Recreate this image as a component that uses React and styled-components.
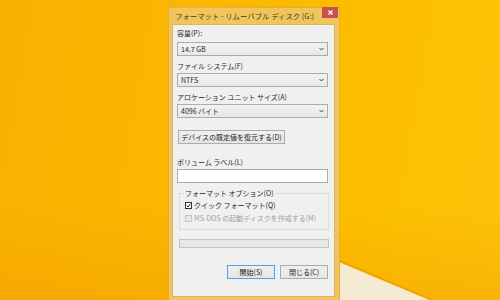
import styled, { createGlobalStyle } from "styled-components";

const GlobalStyle = createGlobalStyle`
  html, body {
    margin: 0;
    padding: 0;
  }
  body {
    font-family: "Noto Sans CJK JP", "Noto Sans", sans-serif;
  }
`;

const Desktop = styled.div`
  position: relative;
  width: 500px;
  height: 300px;
  overflow: hidden;
  background: linear-gradient(180deg, rgba(240, 150, 0, 0) 68%, rgba(240, 150, 0, 0.35) 100%),
    linear-gradient(100deg, #f9b100 0%, #fbb800 45%, #fcc000 75%, #fdc30a 100%);
`;

const Wallpaper = styled.svg`
  position: absolute;
  left: 0;
  top: 0;
`;

const Window = styled.div`
  position: absolute;
  left: 168px;
  top: 7px;
  width: 172px;
  height: 293px;
  box-sizing: border-box;
  background: #f2c55a;
  border: 1px solid #e0ae44;
  border-bottom: none;
  display: flex;
  flex-direction: column;
  padding: 0 4px 3px 3px;
`;

const TitleBar = styled.div`
  height: 16px;
  display: flex;
  align-items: flex-start;
  position: relative;
`;

const Title = styled.div`
  flex: 1;
  text-align: center;
  font-size: 7.4px;
  line-height: 15px;
  color: #3c3c3c;
  white-space: nowrap;
  padding-right: 18px;
`;

const CloseButton = styled.div`
  position: absolute;
  right: -3px;
  top: -1px;
  width: 16px;
  height: 11px;
  background: #c8504f;
  display: flex;
  align-items: center;
  justify-content: center;
`;

const Client = styled.div`
  flex: 1;
  background: #f0f0f0;
  border: 1px solid #dcb463;
  display: flex;
  flex-direction: column;
  padding: 4px 6px 0 4px;
  font-size: 7px;
  color: #1e1e1e;
`;

const Label = styled.div`
  line-height: 9px;
  height: 9px;
  margin-top: ${({ $gap }) => $gap}px;
  white-space: nowrap;
`;

const Combo = styled.div`
  margin-top: ${({ $gap }) => $gap}px;
  height: 14px;
  box-sizing: border-box;
  border: 1px solid #acacac;
  background: linear-gradient(180deg, #f2f2f2, #e8e8e8);
  display: flex;
  align-items: center;
  justify-content: space-between;
  padding: 0 3px 0 3px;
  line-height: 12px;
`;

const Button = styled.div`
  height: 14px;
  box-sizing: border-box;
  width: ${({ $width }) => $width}px;
  border: 1px solid ${({ $primary }) => ($primary ? "#4aa3ee" : "#acacac")};
  background: linear-gradient(180deg, #f0f0f0, #e5e5e5);
  display: flex;
  align-items: center;
  justify-content: center;
  line-height: 12px;
  white-space: nowrap;
`;

const RestoreRow = styled.div`
  margin-top: 12px;
  padding-left: 1px;
`;

const TextInput = styled.div`
  margin-top: 2px;
  height: 14px;
  box-sizing: border-box;
  border: 1px solid #abadb3;
  background: #ffffff;
`;

const Group = styled.fieldset`
  margin: 6px 0 0 2px;
  width: 150px;
  box-sizing: border-box;
  border: 1px solid #dcdcdc;
  padding: 3px 0 6px 5px;
  display: flex;
  flex-direction: column;
  gap: 4px;
`;

const Legend = styled.legend`
  padding: 0 1px;
  margin-left: -1px;
  line-height: 9px;
  font-size: 7px;
`;

const CheckRow = styled.div`
  display: flex;
  align-items: center;
  gap: 2px;
  height: 9px;
  line-height: 9px;
  color: ${({ $disabled }) => ($disabled ? "#a0a0a0" : "#1e1e1e")};
`;

const Box = styled.div`
  width: 7px;
  height: 7px;
  box-sizing: border-box;
  border: 1px solid ${({ $disabled }) => ($disabled ? "#c4c4c4" : "#333333")};
  background: ${({ $disabled }) => ($disabled ? "#e8e8e8" : "#ffffff")};
  display: flex;
  align-items: center;
  justify-content: center;
`;

const Progress = styled.div`
  margin: 9px 0 0 2px;
  width: 150px;
  height: 9px;
  box-sizing: border-box;
  border: 1px solid #c4c4c4;
  background: #e8e8e8;
`;

const Footer = styled.div`
  margin-top: 17px;
  display: flex;
  justify-content: flex-end;
  gap: 5px;
`;

const Chevron = () => (
  <svg width="5" height="4" viewBox="0 0 5 4">
    <path d="M0.5 1 L2.5 3 L4.5 1" fill="none" stroke="#444" strokeWidth="1" />
  </svg>
);

const Check = () => (
  <svg width="5" height="5" viewBox="0 0 5 5">
    <path d="M0.6 2.6 L2 4 L4.4 0.8" fill="none" stroke="#222" strokeWidth="1" />
  </svg>
);

const App = () => {
  return (
    <>
      <GlobalStyle />
      <Desktop>
        <Wallpaper width="500" height="300" viewBox="0 0 500 300">
          <polygon points="330,258 430,300 330,300" fill="#f7ead2" />
          <line x1="330" y1="257" x2="432" y2="300" stroke="#f2a400" strokeWidth="2" />
        </Wallpaper>
        <Window>
          <TitleBar>
            <Title>フォーマット - リムーバブル ディスク (G:)</Title>
            <CloseButton>
              <svg width="5" height="5" viewBox="0 0 5 5">
                <path d="M0.5 0.5 L4.5 4.5 M4.5 0.5 L0.5 4.5" stroke="#fff" strokeWidth="1.2" />
              </svg>
            </CloseButton>
          </TitleBar>
          <Client>
            <Label $gap={0}>容量(P):</Label>
            <Combo $gap={4}>
              <span>14.7 GB</span>
              <Chevron />
            </Combo>
            <Label $gap={6}>ファイル システム(F)</Label>
            <Combo $gap={2}>
              <span>NTFS</span>
              <Chevron />
            </Combo>
            <Label $gap={6}>アロケーション ユニット サイズ(A)</Label>
            <Combo $gap={2}>
              <span>4096 バイト</span>
              <Chevron />
            </Combo>
            <RestoreRow>
              <Button $width={107}>デバイスの既定値を復元する(D)</Button>
            </RestoreRow>
            <Label $gap={14}>ボリューム ラベル(L)</Label>
            <TextInput />
            <Group>
              <Legend>フォーマット オプション(O)</Legend>
              <CheckRow>
                <Box>
                  <Check />
                </Box>
                <span>クイック フォーマット(Q)</span>
              </CheckRow>
              <CheckRow $disabled>
                <Box $disabled />
                <span>MS-DOS の起動ディスクを作成する(M)</span>
              </CheckRow>
            </Group>
            <Progress />
            <Footer>
              <Button $width={48} $primary>
                開始(S)
              </Button>
              <Button $width={48}>閉じる(C)</Button>
            </Footer>
          </Client>
        </Window>
      </Desktop>
    </>
  );
};

export default App;
